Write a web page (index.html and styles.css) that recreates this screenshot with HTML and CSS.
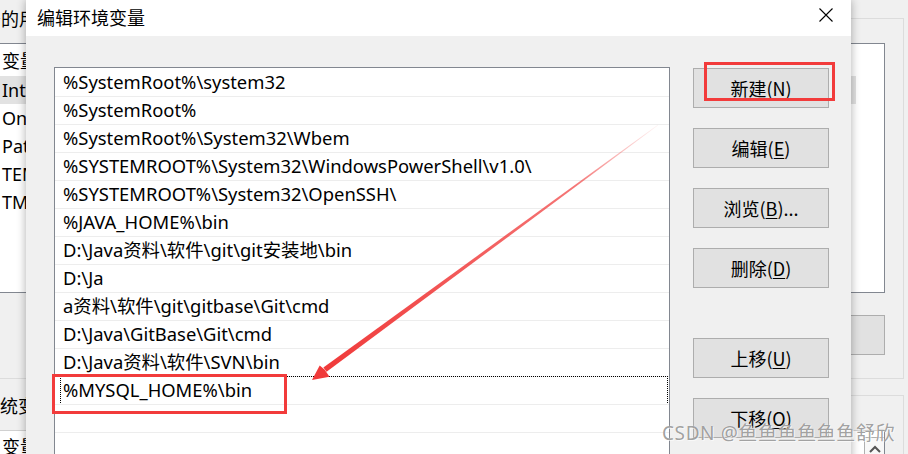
FILE: index.html
```html
<!DOCTYPE html>
<html lang="zh-CN">
<head>
<meta charset="utf-8">
<title>编辑环境变量</title>
<link rel="stylesheet" href="styles.css">
</head>
<body>
<div class="desk">
  <div class="bgwin">
    <div class="group g1">
      <div class="glabel">的用户变量(U)</div>
      <div class="ulist">
        <div class="uhead">变量</div>
        <div class="urow sel">IntelliJ IDEA</div>
        <div class="urow">OneDrive</div>
        <div class="urow">Path</div>
        <div class="urow">TEMP</div>
        <div class="urow">TMP</div>
      </div>
      <div class="gbtns"><div class="bbtn">删除(D)</div></div>
    </div>
    <div class="group g2">
      <div class="glabel g2label">系统变量(S)</div>
      <div class="slist">
        <div class="shead">变量</div>
        <div class="sscroll"><svg width="14" height="10" viewBox="0 0 14 10"><path d="M2 8 L7 3 L12 8" fill="none" stroke="#555" stroke-width="2"/></svg></div>
      </div>
    </div>
  </div>

  <div class="dialog">
    <div class="titlebar">
      <span class="title">编辑环境变量</span>
      <svg class="close" width="14" height="14" viewBox="0 0 14 14"><path d="M0.5 0.5 L13.5 13.5 M13.5 0.5 L0.5 13.5" stroke="#000" stroke-width="1.1" fill="none"/></svg>
    </div>
    <div class="dbody">
      <div class="plist">
        <div class="prow">%SystemRoot%\system32</div>
        <div class="prow">%SystemRoot%</div>
        <div class="prow">%SystemRoot%\System32\Wbem</div>
        <div class="prow">%SYSTEMROOT%\System32\WindowsPowerShell\v1.0\</div>
        <div class="prow">%SYSTEMROOT%\System32\OpenSSH\</div>
        <div class="prow">%JAVA_HOME%\bin</div>
        <div class="prow">D:\Java资料\软件\git\git安装地\bin</div>
        <div class="prow">D:\Ja</div>
        <div class="prow">a资料\软件\git\gitbase\Git\cmd</div>
        <div class="prow">D:\Java\GitBase\Git\cmd</div>
        <div class="prow">D:\Java资料\软件\SVN\bin</div>
        <div class="prow focusrow"><div class="focus">%MYSQL_HOME%\bin</div></div>
        <div class="prow"></div>
        <div class="prow"></div>
      </div>
      <div class="btncol">
        <div class="btn">新建(<u>N</u>)</div>
        <div class="btn">编辑(<u>E</u>)</div>
        <div class="btn">浏览(<u>B</u>)...</div>
        <div class="btn">删除(<u>D</u>)</div>
        <div class="btn gapbtn">上移(<u>U</u>)</div>
        <div class="btn">下移(<u>O</u>)</div>
      </div>
    </div>
  </div>

  <svg class="annot" width="908" height="454" viewBox="0 0 908 454">
    <defs>
      <linearGradient id="shaft" gradientUnits="userSpaceOnUse" x1="658" y1="125" x2="325" y2="370">
        <stop offset="0" stop-color="#f03a3a" stop-opacity="0.05"/>
        <stop offset="0.25" stop-color="#f03a3a" stop-opacity="0.7"/>
        <stop offset="1" stop-color="#f03a3a" stop-opacity="1"/>
      </linearGradient>
    </defs>
    <polygon points="658.2,125.2 326.6,371.8 323.4,367.6 657.8,124.8" fill="url(#shaft)"/>
    <polygon points="312,380 319.7,365.5 324.5,369.5 329.5,376.8" fill="#f03a3a"/>
    <rect x="53.5" y="375.5" width="232" height="37" fill="none" stroke="#f23b3b" stroke-width="3"/>
    <rect x="705.5" y="63.5" width="128" height="36" fill="none" stroke="#f23b3b" stroke-width="3"/>
  </svg>

  <div class="wm">CSDN @鱼鱼鱼鱼鱼鱼舒欣</div>
</div>
</body>
</html>
```

FILE: styles.css
```css
* { box-sizing: border-box; }
html, body { margin: 0; padding: 0; }
body {
  width: 908px;
  height: 454px;
  overflow: hidden;
  font-family: "Noto Sans", "Noto Sans CJK SC", sans-serif;
  font-size: 18px;
  color: #000;
  background: #f0f0f0;
}
.desk {
  position: relative;
  width: 908px;
  height: 454px;
  overflow: hidden;
}

/* background window */
.bgwin {
  position: absolute;
  inset: 0;
  background: #f0f0f0;
  display: flex;
  flex-direction: column;
}
.group {
  flex: none;
  margin-left: -10px;
  margin-right: 4px;
  border: 1px solid #dcdcdc;
  display: flex;
  flex-direction: column;
}
.g1 { margin-top: 18px; height: 361px; }
.g2 { margin-top: 16px; height: 120px; border-bottom: none; }
.glabel {
  flex: none;
  margin-top: -13px;
  margin-left: 10px;
  width: max-content;
  height: 24px;
  line-height: 24px;
  background: #f0f0f0;
  font-family: "Noto Sans CJK SC", sans-serif;
}
.g2label { margin-top: -3px; margin-left: -9px; }
.ulist {
  flex: none;
  margin-top: 13px;
  margin-right: 18px;
  height: 250px;
  background: #fff;
  border: 1px solid #828790;
  border-left: none;
  display: flex;
  flex-direction: column;
}
.uhead {
  height: 32px;
  line-height: 32px;
  padding-left: 11px;
  font-family: "Noto Sans CJK SC", sans-serif;
}
.urow {
  height: 28px;
  line-height: 28px;
  padding-left: 11px;
}
.urow.sel { background: #e2e2e2; margin-right: 28px; }
.gbtns {
  flex: none;
  margin-top: 22px;
  margin-right: 18px;
  display: flex;
  justify-content: flex-end;
}
.bbtn {
  width: 200px;
  height: 40px;
  background: #e1e1e1;
  border: 1px solid #adadad;
  line-height: 38px;
  text-align: center;
  font-family: "Noto Sans CJK SC", sans-serif;
}
.slist {
  margin-top: 13px;
  margin-right: 18px;
  flex: 1;
  background: #fff;
  border-top: 1px solid #d0d0d0;
  border-right: 1px solid #828790;
  display: flex;
}
.shead {
  flex: 1;
  height: 32px;
  line-height: 30px;
  padding-left: 11px;
  font-family: "Noto Sans CJK SC", sans-serif;
}
.sscroll {
  width: 20px;
  margin-top: 6px;
  border: 1px solid #b0b0b0;
  border-right: none;
  border-bottom: none;
  display: flex;
  justify-content: center;
  padding-top: 6px;
  background: #f8f8f8;
}

/* dialog */
.dialog {
  position: absolute;
  left: 26px;
  top: 0;
  width: 825px;
  height: 480px;
  background: #f0f0f0;
  box-shadow: 0 0 9px rgba(0, 0, 0, 0.32);
  display: flex;
  flex-direction: column;
}
.titlebar {
  flex: none;
  height: 36px;
  background: #fff;
  display: flex;
  align-items: center;
  justify-content: space-between;
  padding-left: 11px;
  padding-right: 18px;
}
.title {
  font-family: "Noto Sans CJK SC", sans-serif;
  font-size: 18px;
  line-height: 24px;
  margin-top: -3px;
}
.close { margin-top: -7px; }
.dbody {
  flex: 1;
  min-height: 0;
  display: flex;
  padding: 31px 0 0 28px;
  gap: 23px;
}
.plist {
  flex: none;
  width: 616px;
  height: 500px;
  background: #fff;
  border: 1px solid #828790;
  padding-top: 1px;
  display: flex;
  flex-direction: column;
  font-size: 18.4px;
}
.prow {
  height: 28px;
  flex: none;
  border-bottom: 1px solid #ededed;
  padding-left: 8px;
  line-height: 26px;
  white-space: nowrap;
}
.prow.focusrow { padding-left: 5px; padding-right: 1px; }
.focus {
  height: 27px;
  margin-top: -1px;
  border: 1px dotted #000;
  border-bottom: none;
  padding-left: 2px;
  line-height: 26px;
}
.btncol {
  flex: none;
  margin-top: 1px;
  display: flex;
  flex-direction: column;
  gap: 20px;
}
.btn {
  flex: none;
  width: 136px;
  height: 40px;
  background: #e1e1e1;
  border: 1px solid #adadad;
  display: flex;
  align-items: center;
  justify-content: center;
  font-family: "Noto Sans CJK SC", sans-serif;
  font-size: 18px;
}
.btn u { text-underline-offset: 2px; }
.btn.gapbtn { margin-top: 30px; }

/* annotations */
.annot {
  position: absolute;
  left: 0;
  top: 0;
  pointer-events: none;
}
.wm {
  position: absolute;
  left: 662px;
  top: 421px;
  font-family: "Noto Sans", "Noto Sans CJK SC", sans-serif;
  font-size: 19px;
  line-height: 24px;
  color: rgba(100, 100, 100, 0.62);
  text-shadow: 0 0 1px #fff, 1px 1px 0 rgba(255,255,255,0.6);
  white-space: nowrap;
  letter-spacing: 0.6px;
}
```
